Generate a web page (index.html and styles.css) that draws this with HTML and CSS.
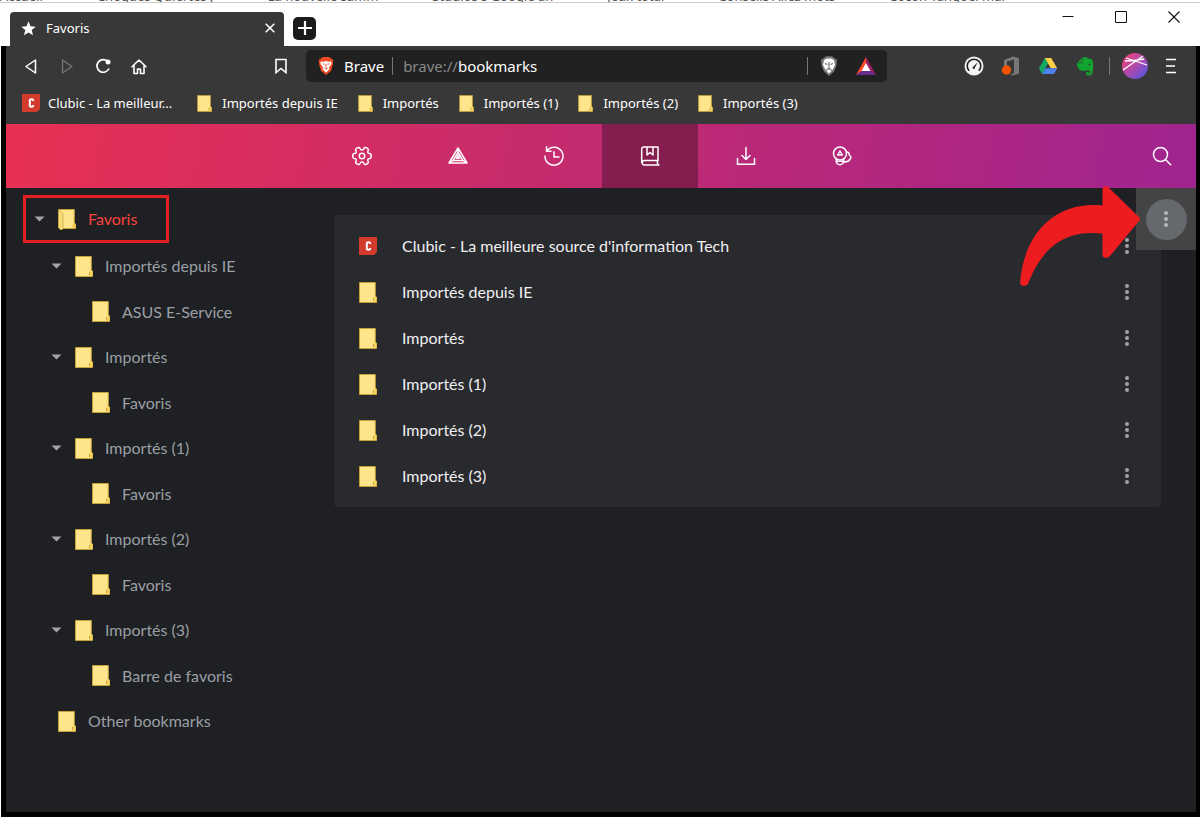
FILE: index.html
```html
<!DOCTYPE html>
<html lang="fr">
<head>
<meta charset="utf-8">
<meta name="viewport" content="width=device-width, initial-scale=1">
<title>Favoris</title>
<link rel="stylesheet" href="styles.css">
</head>
<body>
<svg class="defs" aria-hidden="true">
  <symbol id="folder" viewBox="0 0 18 21"><path d="M.5.5h15.800v14l1.200.5v5.500H.5z" fill="#fee58c" stroke="#c5a23a"/><path d="M14.500 20v-4.500l1.500-1.500 1.500 1v5z" fill="#f7d45c"/><path d="M14.500 19v-3" stroke="#b7953a" stroke-width=".8"/></symbol>
  <symbol id="folder-open" viewBox="0 0 18 21"><path d="M.5.5h15.800v14l1.200.5v4.500H5L3.500 21 .5 19z" fill="#fee58c" stroke="#c5a23a"/><path d="M1 1l4 3.500v14L3.500 20.500 1 18.500z" fill="#f8dc75"/><path d="M1 1l4 3.500v14" fill="none" stroke="#cba946" stroke-width=".8"/><path d="M14.500 19v-3.500l1.500-1.500 1.500 1v4z" fill="#f3cb50"/></symbol>
  <symbol id="clubic" viewBox="0 0 18 18"><path d="M0 0h18v15l-3 3H0z" fill="#d33b2d"/><path d="M11.200 7V6.200Q11.200 5.200 9.500 5.200T7.800 6.200v5.600q0 1 1.700 1t1.700-1V11" fill="none" stroke="#fff" stroke-width="2"/></symbol>
  <symbol id="dots" viewBox="0 0 4 16"><circle cx="2" cy="2" r="2"/><circle cx="2" cy="8" r="2"/><circle cx="2" cy="14" r="2"/></symbol>
  <symbol id="caret" viewBox="0 0 10 6"><path d="M0 .5h10L5 5.500z"/></symbol>
</svg>

<div class="behind" aria-hidden="true"><span>Accueil</span><span>Choques Quiertes (</span><span>La nouvelle samm</span><span>Studios s Google an</span><span>Jeux total</span><span>Conseils Allez mots</span><span>Cocon Tangoel mar</span></div>

<header class="titlebar">
  <div class="tab">
    <svg class="star" viewBox="0 0 16 16"><path d="M8 .3l2.100 5.300 5.700.4-4.400 3.700 1.400 5.600L8 12.200l-4.800 3.100 1.400-5.600L.2 6l5.700-.4z" fill="#fff"/></svg>
    <span class="tab-title">Favoris</span>
    <button class="icon-btn tab-close" aria-label="Fermer l'onglet"><svg width="10" height="10" viewBox="0 0 10 10"><path d="M.7.7l8.600 8.600M9.300.7L.7 9.300" stroke="#fff" stroke-width="1.600"/></svg></button>
  </div>
  <button class="icon-btn new-tab" aria-label="Nouvel onglet"><svg width="14" height="14" viewBox="0 0 14 14"><path d="M7 0v14M0 7h14" stroke="#fff" stroke-width="2.200"/></svg></button>
  <div class="window-controls">
    <button class="icon-btn" aria-label="Réduire"><svg width="12" height="12" viewBox="0 0 12 12"><path d="M.5 5.500h11" stroke="#111"/></svg></button>
    <button class="icon-btn" aria-label="Agrandir"><svg width="12" height="12" viewBox="0 0 12 12"><path d="M.5.5h11v11H.5z" fill="none" stroke="#111"/></svg></button>
    <button class="icon-btn" aria-label="Fermer"><svg width="12" height="12" viewBox="0 0 12 12"><path d="M.5.5l11 11M11.500.5l-11 11" stroke="#111" stroke-width="1.100"/></svg></button>
  </div>
</header>

<div class="window">
  <div class="toolbar">
    <div class="nav-buttons">
      <button class="icon-btn" aria-label="Retour"><svg width="18" height="18" viewBox="0 0 18 18"><path d="M13.500 3v13L4 9.500z" fill="none" stroke="#fff" stroke-width="1.500" stroke-linejoin="round"/></svg></button>
      <button class="icon-btn" aria-label="Avancer" disabled><svg width="18" height="18" viewBox="0 0 18 18"><path d="M4.500 3v13L14 9.500z" fill="none" stroke="#777" stroke-width="1.300" stroke-linejoin="round"/></svg></button>
      <button class="icon-btn" aria-label="Actualiser"><svg width="18" height="18" viewBox="0 0 18 18"><path d="M14.200 5A6.300 6.300 0 1 0 15 11.500" fill="none" stroke="#fff" stroke-width="1.700"/><circle cx="14" cy="5" r="2.500" fill="#fff"/></svg></button>
      <button class="icon-btn" aria-label="Accueil"><svg width="18" height="18" viewBox="0 0 18 18"><path d="M2 9.800L9 3l7 6.800M4 8.500v8h3.500V12h3v4.500H14v-8" fill="none" stroke="#fff" stroke-width="1.600" stroke-linejoin="round" stroke-linecap="round"/></svg></button>
      <button class="icon-btn bookmark-page" aria-label="Ajouter aux favoris"><svg width="18" height="18" viewBox="0 0 18 18"><path d="M4 2.500h10v13l-5-4-5 4z" fill="none" stroke="#fff" stroke-width="1.600"/></svg></button>
    </div>
    <div class="address">
      <svg width="16" height="18" viewBox="0 0 16 18"><path d="M3 1.500L5 0h6l2 1.500 2.200 1.300-.3 4.700-2 6.500L8 18l-4.900-4-2-6.500-.3-4.700z" fill="#f04a24"/><path d="M2.800 4.500l2.700.2L8 4l2.500.7 2.700-.2.4 2.300L11 10.500l.4 1.800L8 15.500l-3.400-3.200.4-1.800-2.600-3.700z" fill="#fff"/><path d="M4.500 6.800l2.200.5M11.500 6.800l-2.200.5M8 7v3.500M6.500 11L8 12l1.500-1" stroke="#ef6a4c" stroke-width="1.100" fill="none"/></svg>
      <span class="site">Brave</span>
      <span class="sep"></span>
      <label class="scheme" for="url">brave://</label><input id="url" type="text" value="bookmarks">
      <span class="sep thin"></span>
      <button class="icon-btn" aria-label="Boucliers"><svg width="18" height="20" viewBox="0 0 18 20"><path d="M1 3.500L4 2l2-1.800h6L14 2l3 1.500-.5 6L14 15.500 9 20l-5-4.500-2.500-6z" fill="#777"/><path d="M4 4l3-1.500h4L14 4l1 5-2.500 5L9 17.500 5.500 14 3 9z" fill="#fff"/><path d="M5 7.500l2.500 1M13 7.500l-2.500 1M9 6v5.500M7.500 12L9 13.200l1.500-1.200M6 13.500l1.500 1M12 13.500l-1.500 1" stroke="#666" stroke-width="1.100" fill="none"/></svg></button>
      <button class="icon-btn" aria-label="Brave Rewards"><svg width="20" height="18" viewBox="0 0 20 18"><path d="M10 0L0 18l10-6z" fill="#ff4724"/><path d="M10 0l10 18-10-6z" fill="#9e1f63"/><path d="M0 18h20l-10-7z" fill="#662d91"/><path d="M10 6l4.500 8h-9z" fill="#fff"/></svg></button>
    </div>
    <div class="extensions">
      <button class="icon-btn" aria-label="Vitesse"><svg width="20" height="20" viewBox="0 0 20 20"><circle cx="10" cy="10" r="9.500" fill="#f4f4f4"/><path d="M5.200 14.800a6.800 6.800 0 1 1 9.600 0" fill="none" stroke="#222" stroke-width="1.600"/><path d="M8.800 11.300l5-5.300-3.500 6.800z" fill="#222"/><circle cx="9.700" cy="11.800" r="1.100" fill="#222"/></svg></button>
      <button class="icon-btn" aria-label="Office"><svg width="20" height="20" viewBox="0 0 20 20"><path d="M3 4l9-3.500 6 1.500v15.500L12 19.500l-3-1 4-1.500V3.500L6 5.500V10H3z" fill="#777"/><circle cx="5.500" cy="14" r="4.700" fill="#f55300"/></svg></button>
      <button class="icon-btn" aria-label="Google Drive"><svg width="20" height="20" viewBox="0 0 20 20"><path d="M6.800 2L1 12.300 4 18 10 7.500z" fill="#11a861"/><path d="M6.800 2h6.400l6 10.300h-6.400z" fill="#ffcf48"/><path d="M7.300 12.300h12L16 18H4z" fill="#4c82ed"/></svg></button>
      <button class="icon-btn" aria-label="Evernote"><svg width="20" height="20" viewBox="0 0 20 20"><path d="M2 7l5-5 2-1 3 .3 1 1.200 4 .7L18 6l.2 6-1 6-2.200 1.600h-3l-1-1.500.5-2 2.200-.7.400 1.500-1.200.8 1.300.3.800-2-1-2h-2L10 15l-5-.6-2-3L1.500 8z" fill="#12a32e"/><path d="M7 2v5H2" stroke="#39403a" stroke-width=".7" fill="none"/><path d="M13.200 9q1.500-2.500 2.500.3z" fill="#333"/></svg></button>
      <span class="sep thin"></span>
      <button class="icon-btn profile" aria-label="Profil"><svg width="26" height="26" viewBox="0 0 26 26"><defs><linearGradient id="ball" x1="0" y1="0" x2="1" y2="1"><stop offset=".15" stop-color="#e8437f"/><stop offset=".6" stop-color="#9c4bb8"/><stop offset="1" stop-color="#3c59ee"/></linearGradient></defs><circle cx="13" cy="13" r="13" fill="url(#ball)"/><path d="M1 17L21 3M4 5l21 7M3 8q9 0 19-2" stroke="#fff" stroke-width="1.300" fill="none"/></svg></button>
      <button class="icon-btn menu" aria-label="Menu"><svg width="12" height="16" viewBox="0 0 12 16"><path d="M1 1.500h10M1 8h9M1 14.500h10" stroke="#fff" stroke-width="1.600"/></svg></button>
    </div>
  </div>

  <nav class="bookmark-bar" aria-label="Barre de favoris">
    <a class="site-link" href="#"><svg class="site-icon"><use href="#clubic"/></svg>Clubic - La meilleur...</a>
    <a href="#"><svg class="bar-folder"><use href="#folder"/></svg>Importés depuis IE</a>
    <a href="#"><svg class="bar-folder"><use href="#folder"/></svg>Importés</a>
    <a href="#"><svg class="bar-folder"><use href="#folder"/></svg>Importés (1)</a>
    <a href="#"><svg class="bar-folder"><use href="#folder"/></svg>Importés (2)</a>
    <a href="#"><svg class="bar-folder"><use href="#folder"/></svg>Importés (3)</a>
  </nav>

  <nav class="section-nav" aria-label="Sections">
    <a href="#" aria-label="Paramètres"><svg viewBox="0 0 20 20"><path d="M10 3.900Q11.600 3.900 12 2.500 12.600 1 14 1.600L15.600 2.500Q17 3.500 16 4.800 15.200 6.200 16.300 7.200 17 7.400 17.800 7.400 19.200 7.600 19.200 10T17.800 12.600Q17 12.600 16.300 12.800 15.200 13.800 16 15.200 17 16.500 15.600 17.500L14 18.400Q12.600 19 12 17.500 11.600 16.100 10 16.100T8 17.500Q7.400 19 6 18.400L4.400 17.500Q3 16.500 4 15.200 4.800 13.800 3.700 12.800 3 12.600 2.200 12.600.8 12.400.8 10T2.200 7.400Q3 7.400 3.700 7.200 4.800 6.200 4 4.800 3 3.500 4.400 2.500L6 1.600Q7.400 1 8 2.500 8.400 3.900 10 3.900z"/><circle cx="10" cy="10" r="2.700"/></svg></a>
    <a href="#" aria-label="Récompenses"><svg viewBox="0 0 20 20"><path d="M10 2L1 17h18zM10 6.500L5 14.500h10zM10 9.500v2.500M1.500 17L5 14.500M18.500 17L15 14.500M10 2v4.500M8.500 12.300h3L10 10z"/></svg></a>
    <a href="#" aria-label="Historique"><svg viewBox="0 0 20 20"><path d="M3 4.500A9 9 0 1 1 1 10M2.500.8v4.400h4.500M10 5.800V11h5"/></svg></a>
    <a class="current" href="#" aria-label="Favoris" aria-current="page"><svg viewBox="0 0 20 20"><path d="M18 14.500H4a2.300 2.300 0 0 0 0 4.500h15M1.700 16.800V3.200Q1.700 1 4 1h14v13.500l-.8 2 .8 2M7 1v8l3-2.500L13 9V1"/></svg></a>
    <a href="#" aria-label="Téléchargements"><svg viewBox="0 0 20 20"><path d="M10 1.500v12M6 9.500l4 4 4-4M1.500 12.500v5.800h17v-5.800"/></svg></a>
    <a href="#" aria-label="Portefeuille"><svg viewBox="0 0 20 20"><circle cx="8" cy="7.500" r="6.500"/><path d="M8 5L5.700 9h4.600zM14.500 5.800Q17.200 6.200 17.300 9 20 11 18 13.200 16.500 16.200 12 16M4.200 13Q3.500 18.500 8 18.800 12.200 18.500 11.700 13M4.500 15.300h7"/></svg></a>
    <button class="icon-btn search" aria-label="Rechercher"><svg viewBox="0 0 20 20"><circle cx="8.500" cy="8.500" r="7"/><path d="M13.700 13.700l5 5"/></svg></button>
  </nav>

  <div class="content">
    <aside class="tree">
      <a class="row l0 selected" href="#"><svg class="caret"><use href="#caret"/></svg><svg class="folder"><use href="#folder-open"/></svg>Favoris</a>
      <a class="row l1" href="#"><svg class="caret"><use href="#caret"/></svg><svg class="folder"><use href="#folder"/></svg>Importés depuis IE</a>
      <a class="row l2" href="#"><svg class="folder"><use href="#folder"/></svg>ASUS E-Service</a>
      <a class="row l1" href="#"><svg class="caret"><use href="#caret"/></svg><svg class="folder"><use href="#folder"/></svg>Importés</a>
      <a class="row l2" href="#"><svg class="folder"><use href="#folder"/></svg>Favoris</a>
      <a class="row l1" href="#"><svg class="caret"><use href="#caret"/></svg><svg class="folder"><use href="#folder"/></svg>Importés (1)</a>
      <a class="row l2" href="#"><svg class="folder"><use href="#folder"/></svg>Favoris</a>
      <a class="row l1" href="#"><svg class="caret"><use href="#caret"/></svg><svg class="folder"><use href="#folder"/></svg>Importés (2)</a>
      <a class="row l2" href="#"><svg class="folder"><use href="#folder"/></svg>Favoris</a>
      <a class="row l1" href="#"><svg class="caret"><use href="#caret"/></svg><svg class="folder"><use href="#folder"/></svg>Importés (3)</a>
      <a class="row l2" href="#"><svg class="folder"><use href="#folder"/></svg>Barre de favoris</a>
      <a class="row l0" href="#"><span class="caret"></span><svg class="folder"><use href="#folder"/></svg>Other bookmarks</a>
    </aside>
    <main class="main">
      <ul class="card">
        <li><svg class="site-icon"><use href="#clubic"/></svg><a href="#">Clubic - La meilleure source d'information Tech</a><button class="icon-btn more" aria-label="Plus d'actions"><svg><use href="#dots"/></svg></button></li>
        <li><svg class="folder"><use href="#folder"/></svg><a href="#">Importés depuis IE</a><button class="icon-btn more" aria-label="Plus d'actions"><svg><use href="#dots"/></svg></button></li>
        <li><svg class="folder"><use href="#folder"/></svg><a href="#">Importés</a><button class="icon-btn more" aria-label="Plus d'actions"><svg><use href="#dots"/></svg></button></li>
        <li><svg class="folder"><use href="#folder"/></svg><a href="#">Importés (1)</a><button class="icon-btn more" aria-label="Plus d'actions"><svg><use href="#dots"/></svg></button></li>
        <li><svg class="folder"><use href="#folder"/></svg><a href="#">Importés (2)</a><button class="icon-btn more" aria-label="Plus d'actions"><svg><use href="#dots"/></svg></button></li>
        <li><svg class="folder"><use href="#folder"/></svg><a href="#">Importés (3)</a><button class="icon-btn more" aria-label="Plus d'actions"><svg><use href="#dots"/></svg></button></li>
      </ul>
    </main>
    <div class="organize"><button class="icon-btn" aria-label="Organiser"><svg><use href="#dots"/></svg></button></div>
    <svg class="arrow" viewBox="0 0 120 102" aria-hidden="true"><path d="M82.500 4Q83 0 88 2L119 32q2 2 0 4L90 71q-5 4-7.500 0V48.500C55 46 26 52 8 99q-4 4-8 0C3 52 32 16 82.500 20.500z" fill="#ed1c1f"/></svg>
  </div>
</div>
</body>
</html>
```
FILE: styles.css
```css
* { box-sizing: border-box; }
body {
  margin: 0;
  min-height: 100vh;
  display: flex;
  flex-direction: column;
  background: #fff;
  color: #fff;
  font: 14px/20px "Noto Sans", "Open Sans", sans-serif;
}
a { color: inherit; text-decoration: none; }
svg { display: block; flex: none; }
.defs { position: absolute; width: 0; height: 0; }
.icon-btn {
  display: flex;
  align-items: center;
  justify-content: center;
  flex: none;
  padding: 0;
  border: 0;
  background: none;
}

/* Sliver of the window underneath */
.behind {
  display: flex;
  align-items: flex-end;
  gap: 54px;
  height: 3px;
  overflow: hidden;
  border-bottom: 1px solid #ccc;
  color: #555;
  font-size: 13px;
  line-height: 12px;
  white-space: nowrap;
}

/* Tab strip */
.titlebar { display: flex; align-items: flex-end; height: 43px; padding-left: 10px; }
.tab {
  display: flex;
  align-items: center;
  width: 274px;
  height: 34px;
  padding: 0 8px 2px 11px;
  border-radius: 4px 4px 0 0;
  background: #383838;
}
.star { width: 15px; height: 15px; }
.tab-title { flex: 1; margin-left: 10px; font-size: 13px; }
.tab-close { width: 12px; height: 20px; }
.new-tab {
  align-self: center;
  width: 23px;
  height: 23px;
  margin: 7px 0 0 9px;
  border-radius: 5px;
  background: #1b1b1b;
}
.window-controls { display: flex; align-self: flex-start; margin-left: auto; }
.window-controls .icon-btn { width: 53px; height: 27px; }

/* Browser window */
.window {
  flex: 1;
  display: flex;
  flex-direction: column;
  margin-left: 1px;
  border: solid #000;
  border-width: 0 4px 5px 5px;
  background: #1f2024;
}
.toolbar { display: flex; align-items: center; height: 40px; background: #383838; }
.nav-buttons { display: flex; align-items: center; width: 300px; padding: 0 16px; gap: 18px; }
.bookmark-page { margin-left: auto; }
.address {
  flex: 1;
  display: flex;
  align-items: center;
  min-width: 0;
  height: 32px;
  padding: 0 11px 0 12px;
  border-radius: 5px;
  background: #212121;
  font-size: 15px;
}
.site { margin: 0 8px 0 10px; }
.sep { width: 1px; height: 18px; background: #777; }
.scheme { margin-left: 10px; color: #888; }
.address input {
  flex: 1;
  min-width: 0;
  padding: 0;
  border: 0;
  background: none;
  color: #fff;
  font: inherit;
}
.address .icon-btn { margin-left: 12px; }
.address .icon-btn:last-child { margin-left: 18px; }
.extensions { display: flex; align-items: center; gap: 17px; padding: 0 19px 0 77px; }
.extensions .sep { margin: 0 -5px 0 -3px; }

.bookmark-bar {
  display: flex;
  align-items: center;
  gap: 20px;
  height: 38px;
  padding: 0 16px 4px;
  background: #383838;
  font-size: 13px;
  white-space: nowrap;
}
.bookmark-bar a { display: flex; align-items: center; gap: 10px; }
.bookmark-bar .site-link { gap: 8px; margin-right: 5px; }
.bar-folder { width: 15px; height: 17px; }
.site-icon { width: 18px; height: 18px; }

/* Section navigation */
.section-nav {
  display: flex;
  height: 64px;
  padding-left: 308px;
  background: linear-gradient(100deg, #e83053, #c22a70 50%, #a0248f);
}
.section-nav a { display: flex; align-items: center; justify-content: center; width: 96px; }
.section-nav .current { background: #831e4f; }
.section-nav svg {
  width: 20px;
  height: 20px;
  fill: none;
  stroke: #fff;
  stroke-width: 1.5;
  stroke-linejoin: round;
  stroke-linecap: round;
}
.search { width: 68px; margin-left: auto; }

/* Bookmark manager */
.content {
  position: relative;
  flex: 1;
  display: grid;
  grid-template-columns: 308px 1fr;
  align-items: start;
  font-family: Lato, "Open Sans", sans-serif;
  font-size: 16px;
}
.tree { padding: 7px 0 0 17px; color: #9a9fa5; }
.row { display: flex; align-items: center; height: 46px; }
.row.l0 { padding-left: 11px; }
.row.l1 { padding-left: 28px; }
.row.l2 { height: 45px; padding-left: 69px; }
.row.selected {
  width: 146px;
  height: 48px;
  padding-left: 8px;
  border: 3px solid #e31e24;
  color: #f8433a;
}
.caret { width: 11px; height: 6px; margin-right: 13px; fill: #a5a5a7; }
.folder { width: 18px; height: 21px; }
.row .folder { margin-right: 12px; }
.main { padding: 27px 35px 0 20px; }
.card {
  margin: 0;
  padding: 8px 26px 8px 25px;
  list-style: none;
  border-radius: 4px;
  background: #292a2e;
  color: #f0f0f2;
}
.card li { display: flex; align-items: center; height: 46px; }
.card a { flex: 1; margin-left: 25px; }
.more { width: 16px; height: 30px; }
.more svg { width: 4px; height: 16px; fill: #a2a3a6; }
.organize {
  position: absolute;
  top: 0;
  right: 0;
  display: flex;
  align-items: center;
  justify-content: center;
  width: 60px;
  height: 62px;
  background: #444445;
}
.organize .icon-btn { width: 41px; height: 41px; border-radius: 50%; background: #65696d; }
.organize svg { width: 4px; height: 16px; fill: #b5b8bb; }
.arrow { position: absolute; top: -3px; right: 56px; width: 120px; height: 102px; }
```
